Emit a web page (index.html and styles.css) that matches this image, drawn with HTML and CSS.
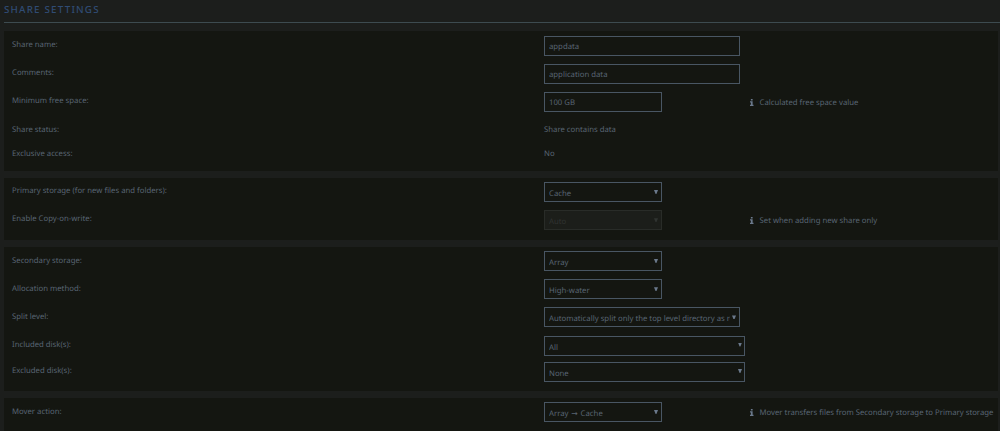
FILE: index.html
```html
<!DOCTYPE html>
<html lang="en">
<head>
	<meta charset="utf-8">
	<title>Share Settings</title>
	<meta name="viewport" content="width=device-width, initial-scale=1.0">
	<link rel="stylesheet" href="styles.css">
</head>
<body>
	<h1 class="title">SHARE SETTINGS</h1>
	<form class="settings">
		<section class="panel general">
			<div class="row"><label>Share name:</label><div class="field"><input class="wide" type="text" value="appdata"></div></div>
			<div class="row"><label>Comments:</label><div class="field"><input class="wide" type="text" value="application data"></div></div>
			<div class="row"><label>Minimum free space:</label><div class="field"><input class="narrow" type="text" value="100 GB"></div>
				<p class="note"><svg class="info" viewBox="0 0 4 8"><path d="M1 0h2v1.8H1zM0 2.7h3v4h1V8H0V6.700h1V4H0z"/></svg><span>Calculated free space value</span></p></div>
			<div class="row plain"><label>Share status:</label><div class="field">Share contains data</div></div>
			<div class="row plain"><label>Exclusive access:</label><div class="field">No</div></div>
		</section>
		<section class="panel primary">
			<div class="row"><label>Primary storage (for new files and folders):</label><div class="field"><span class="select narrow"><select><option>Cache</option></select></span></div></div>
			<div class="row"><label>Enable Copy-on-write:</label><div class="field"><span class="select narrow disabled"><select disabled><option>Auto</option></select></span></div>
				<p class="note"><svg class="info" viewBox="0 0 4 8"><path d="M1 0h2v1.8H1zM0 2.7h3v4h1V8H0V6.700h1V4H0z"/></svg><span>Set when adding new share only</span></p></div>
		</section>
		<section class="panel secondary">
			<div class="row"><label>Secondary storage:</label><div class="field"><span class="select narrow"><select><option>Array</option></select></span></div></div>
			<div class="row"><label>Allocation method:</label><div class="field"><span class="select narrow"><select><option>High-water</option></select></span></div></div>
			<div class="row"><label>Split level:</label><div class="field"><span class="select wide"><select><option>Automatically split only the top level directory as required</option></select></span></div></div>
			<div class="row disks"><label>Included disk(s):</label><div class="field"><span class="select multi"><select><option>All</option></select></span></div></div>
			<div class="row disks"><label>Excluded disk(s):</label><div class="field"><span class="select multi"><select><option>None</option></select></span></div></div>
		</section>
		<section class="panel mover">
			<div class="row"><label>Mover action:</label><div class="field"><span class="select narrow"><select class="direction"><option>Array → Cache</option></select></span></div>
				<p class="note"><svg class="info" viewBox="0 0 4 8"><path d="M1 0h2v1.8H1zM0 2.7h3v4h1V8H0V6.700h1V4H0z"/></svg><span>Mover transfers files from Secondary storage to Primary storage</span></p></div>
		</section>
	</form>
</body>
</html>
```
FILE: styles.css
```css
*{margin:0; padding:0; box-sizing:border-box;}
body{
	height:431px;
	padding:0 2px 0 4px;
	overflow:hidden;
	background-color:#1c1e1c;
	color:#596573;
	font-family:"Noto Sans", "DejaVu Sans", sans-serif;
	font-size:7.75px;
	letter-spacing:0;
	text-rendering:geometricPrecision;
}

.title{
	height:23px;
	margin-right:-2px;
	border-bottom:1px solid #3d4b50;
	color:#304c74;
	font-size:9.8px;
	font-weight:500;
	letter-spacing:1.2px;
	line-height:19px;
}

.settings{display:flex; flex-direction:column; gap:7px; padding-top:8px;}
.panel{padding:5px 0 0 8px; background-color:#141611;}
	.general{height:140px;}
	.primary{height:62px; padding-top:4px;}
	.secondary{height:144px; padding-top:4px;}
	.mover{height:33px; padding-top:4px;}

/* label | control | hint */
.row{display:grid; grid-template-columns:532px 206px 1fr; height:28.2px;}
	.row label{line-height:19px;}
	.row .field{line-height:19px;}
	.plain{height:24.5px;}
	.disks{height:26.5px;}
	.general label{line-height:18px;}
	.general .plain label{line-height:19px;}
	.secondary label, .mover label{line-height:20px;}
	.secondary .disks label{line-height:19px;}

input, select{
	display:block;
	height:20px;
	border:1px solid #495663;
	border-radius:0;
	outline:0;
	background-color:transparent;
	color:inherit;
	font:inherit;
	letter-spacing:inherit;
	text-rendering:inherit;
	padding:2px 4px 0;
}
.wide{width:196px;}
.narrow{width:118px;}
.multi{width:201px;}

.select{display:block; position:relative;}
	.select select{width:100%; padding-right:9px; appearance:none;}
	.select::after{
		content:"";
		position:absolute;
		top:8px;
		right:4px;
		width:4px;
		height:4px;
		background-color:#6b798c;
		clip-path:polygon(0 0, 100% 0, 60% 100%, 40% 100%);
	}
	.multi::after{right:3px; top:7px;}
	.select .direction{word-spacing:0.8px;}
	.disabled select{border-color:#292c28; background-color:#1c1e1a; color:#303331; opacity:1;}
	.disabled::after{background-color:#303431;}

.note{display:flex; align-items:center; height:20px; white-space:nowrap;}
	.note span{padding-top:2px;}
	.info{width:3.5px; height:7px; margin-right:6px; fill:#6b798c;}
```
